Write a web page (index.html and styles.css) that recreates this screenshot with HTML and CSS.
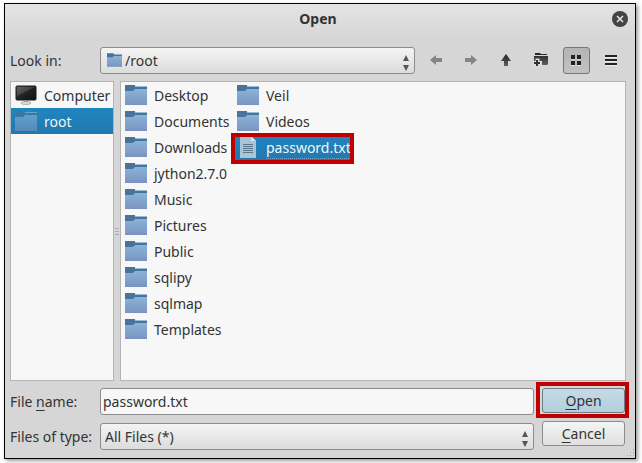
FILE: index.html
```html
<!DOCTYPE html>
<html lang="en">
<head>
    <meta charset="UTF-8">
    <meta name="viewport" content="width=device-width, initial-scale=1.0">
    <title>Open</title>
    <link rel="stylesheet" href="styles.css">
</head>
<body>
    <!-- shared icons -->
    <svg class="defs" width="0" height="0" aria-hidden="true">
        <defs>
            <linearGradient id="folder-fill" x1="0" y1="0" x2="0" y2="1">
                <stop offset="0" stop-color="#8cb5dc"/>
                <stop offset="1" stop-color="#7b93bf"/>
            </linearGradient>
            <linearGradient id="screen-fill" x1="0" y1="0" x2="1" y2="1">
                <stop offset="0" stop-color="#555"/>
                <stop offset="0.5" stop-color="#222"/>
                <stop offset="1" stop-color="#111"/>
            </linearGradient>
            <linearGradient id="dark-fill" x1="0" y1="0" x2="0" y2="1">
                <stop offset="0" stop-color="#222"/>
                <stop offset="1" stop-color="#606060"/>
            </linearGradient>
            <symbol id="folder" viewBox="0 0 22 20">
                <path d="M0 3h22v17H0z" fill="url(#folder-fill)"/>
                <path d="M0 0h10v2h12v2H10L8 6H0z" fill="#46749a"/>
                <path d="M10 1h12v1H10z" fill="#9fb9cd"/>
            </symbol>
            <symbol id="spin" viewBox="0 0 6 16">
                <path d="M3 0l3 6H0zM3 16l3-6H0z" fill="#555"/>
            </symbol>
        </defs>
    </svg>

    <main class="dialog">
        <header class="titlebar">
            <h1>Open</h1>
            <button class="close" type="button" aria-label="Close">
                <svg width="16" height="16" viewBox="0 0 16 16"><circle cx="8" cy="8" r="8" fill="#444"/><path d="M5 5l6 6M11 5l-6 6" stroke="#e8e8e8" stroke-width="1.5"/></svg>
            </button>
        </header>

        <div class="toolbar">
            <label for="look-in">Look in:</label>
            <div class="combo combo-icon">
                <svg class="combo-folder" width="15" height="14"><use href="#folder"/></svg>
                <select id="look-in"><option>/root</option></select>
                <svg class="spin" width="6" height="16"><use href="#spin"/></svg>
            </div>
            <button class="tool" type="button" aria-label="Back" disabled>
                <svg width="14" height="12" viewBox="0 0 14 12"><path d="M1 6l6-5v3h6v4H7v3z" fill="#858585"/></svg>
            </button>
            <button class="tool" type="button" aria-label="Forward" disabled>
                <svg width="14" height="12" viewBox="0 0 14 12"><path d="M13 6L7 1v3H1v4h6v3z" fill="#858585"/></svg>
            </button>
            <button class="tool" type="button" aria-label="Parent directory">
                <svg width="12" height="14" viewBox="0 0 12 14"><path d="M6 1l5 7H8v5H4V8H1z" fill="url(#dark-fill)"/></svg>
            </button>
            <button class="tool" type="button" aria-label="Create new folder">
                <svg width="16" height="16" viewBox="0 0 16 16"><path d="M2 1h5l1 1h6v1H2zM1 4h14v8l-1 1H1z" fill="url(#dark-fill)"/><path d="M4.500 6.500v9M0 11h9" stroke="#ddd" stroke-width="4"/><path d="M4 8v6M1 11h6" stroke="#333" stroke-width="2"/></svg>
            </button>
            <button class="tool active" type="button" aria-label="List view" aria-pressed="true">
                <svg width="12" height="12" viewBox="0 0 12 12"><path d="M1 1h4v4H1zM7 1h4v4H7zM1 7h4v4H1zM7 7h4v4H7z" fill="#222"/><path d="M1 5.500h4M7 5.500h4M1 11.500h4M7 11.500h4" stroke="#ddd"/></svg>
            </button>
            <button class="tool" type="button" aria-label="Detail view">
                <svg width="12" height="12" viewBox="0 0 12 12"><path d="M0 1h12v2H0zM0 5h12v2H0zM0 9h12v2H0z" fill="#222"/><path d="M0 3.500h12M0 7.500h12M0 11.500h12" stroke="#eee"/></svg>
            </button>
        </div>

        <div class="panes">
            <ul class="pane places">
                <li>
                    <svg width="22" height="20" viewBox="0 0 22 20"><rect x="1" y="1" width="20" height="14" rx="1" fill="url(#screen-fill)" stroke="#1b1b1b"/><path d="M2 2h18L2 11z" fill="#fff" opacity="0.12"/><path d="M9 16h4v2H9z" fill="#aaa"/><ellipse cx="11" cy="18" rx="5" ry="1.500" fill="#ddd" stroke="#999" stroke-width="0.7"/></svg>
                    <span>Computer</span>
                </li>
                <li class="selected"><svg class="dimmed" width="22" height="20"><use href="#folder"/></svg><span>root</span></li>
            </ul>
            <div class="splitter"></div>
            <ul class="pane files">
                <li><svg width="22" height="20"><use href="#folder"/></svg><span>Desktop</span></li>
                <li><svg width="22" height="20"><use href="#folder"/></svg><span>Documents</span></li>
                <li><svg width="22" height="20"><use href="#folder"/></svg><span>Downloads</span></li>
                <li><svg width="22" height="20"><use href="#folder"/></svg><span>jython2.7.0</span></li>
                <li><svg width="22" height="20"><use href="#folder"/></svg><span>Music</span></li>
                <li><svg width="22" height="20"><use href="#folder"/></svg><span>Pictures</span></li>
                <li><svg width="22" height="20"><use href="#folder"/></svg><span>Public</span></li>
                <li><svg width="22" height="20"><use href="#folder"/></svg><span>sqlipy</span></li>
                <li><svg width="22" height="20"><use href="#folder"/></svg><span>sqlmap</span></li>
                <li><svg width="22" height="20"><use href="#folder"/></svg><span>Templates</span></li>
                <li><svg width="22" height="20"><use href="#folder"/></svg><span>Veil</span></li>
                <li><svg width="22" height="20"><use href="#folder"/></svg><span>Videos</span></li>
                <li class="selected marked">
                    <svg width="22" height="22" viewBox="0 0 22 22"><path d="M3 0h11l5 5v17H3z" fill="#a9c4d6"/><path d="M14 0v5h5z" fill="#d3e3ee"/><path d="M6 8.500h10M6 10.500h10M6 12.500h10M6 14.500h10M6 16.500h10" stroke="#58798e"/></svg>
                    <span>password.txt</span>
                </li>
            </ul>
        </div>

        <form class="footer">
            <div class="fields">
                <label for="file-name">File <u>n</u>ame:</label>
                <input type="text" id="file-name" value="password.txt">
                <label for="file-type">Files of type:</label>
                <div class="combo">
                    <select id="file-type"><option>All Files (*)</option></select>
                    <svg class="spin" width="6" height="16"><use href="#spin"/></svg>
                </div>
            </div>
            <div class="actions">
                <div class="marked"><button class="primary" type="button"><u>O</u>pen</button></div>
                <button type="button"><u>C</u>ancel</button>
            </div>
        </form>
        <svg class="grip" width="8" height="8" viewBox="0 0 8 8"><path d="M6 0h1v1H6zM3 3h1v1H3zM6 3h1v1H6zM0 6h1v1H0zM3 6h1v1H3zM6 6h1v1H6z" fill="#aaa"/></svg>
    </main>
</body>
</html>
```
FILE: styles.css
```css
* {
    box-sizing: border-box;
}

body {
    margin: 0;
    padding: 3px 6px 4px 4px;
    background: #fff;
    color: #333;
    font-family: "Noto Sans", sans-serif;
    font-size: 14px;
    line-height: 20px;
}

button, input, select {
    color: inherit;
    font: inherit;
}

.defs {
    position: absolute;
}

.dialog {
    position: relative;
    padding: 0 9px 8px 5px;
    border: 1px solid #000;
    background: linear-gradient(#e4e4e4, #d6d6d6 36px);
    box-shadow: 2px 2px 4px rgba(0, 0, 0, 0.4);
}

/* title bar */
.titlebar {
    position: relative;
    height: 43px;
    padding-top: 5px;
}

h1 {
    margin: 0;
    font-size: 14px;
    line-height: 20px;
    text-align: center;
}

.close {
    position: absolute;
    top: 7px;
    right: -2px;
    width: 16px;
    height: 16px;
    padding: 0;
    border: none;
    background: none;
}

.close svg {
    display: block;
}

/* look in row */
.toolbar {
    display: flex;
    gap: 8px;
    align-items: center;
    padding-right: 1px;
}

.toolbar label {
    width: 82px;
}

.toolbar .combo {
    flex: 1;
}

.tool {
    display: flex;
    align-items: center;
    justify-content: center;
    width: 27px;
    height: 27px;
    padding: 0 1px 1px 0;
    border: 1px solid transparent;
    border-radius: 3px;
    background: none;
}

.tool.active {
    border-color: #777;
    background: linear-gradient(#b4b4b4, #c2c2c2);
}

.combo {
    position: relative;
}

select, input {
    display: block;
    width: 100%;
    height: 27px;
    border: 1px solid #8c8c8c;
    border-radius: 3px;
    outline: none;
}

select {
    padding: 0 20px 0 4px;
    appearance: none;
    background: linear-gradient(#f4f4f4, #dcdcdc);
}

input {
    padding: 0 2px;
    background: #f7f7f7;
}

.combo-icon select {
    padding-left: 24px;
}

.combo-folder {
    position: absolute;
    top: 6px;
    left: 7px;
}

.spin {
    position: absolute;
    top: 8px;
    right: 6px;
}

/* lists */
.panes {
    display: flex;
    margin-top: 7px;
}

.pane {
    min-height: 300px;
    margin: 0;
    padding: 0;
    border: 1px solid #b4b4b4;
    background: #f7f7f7;
    list-style: none;
}

.places {
    width: 104px;
}

.files {
    display: grid;
    flex: 1;
    grid-template-rows: repeat(10, 26px);
    grid-auto-columns: 112px;
    grid-auto-flow: column;
    padding-left: 2px;
}

.pane li {
    display: flex;
    align-items: center;
    gap: 7px;
    height: 26px;
    padding-left: 2px;
    white-space: nowrap;
}

.pane span {
    padding-top: 2px;
}

.places li {
    padding-left: 4px;
}

.pane .selected {
    background: linear-gradient(#1f86c0, #2378ae);
    color: #f0f6fa;
}

.dimmed {
    opacity: 0.6;
}

.splitter {
    width: 6px;
    background: repeating-linear-gradient(#aaa 0 1px, transparent 1px 3px) center / 4px 7px no-repeat;
}

.files .selected {
    width: 116px;
}

.files .selected span {
    border-bottom: 1px dotted #6fa9cf;
}

/* red frame round the things to click */
.marked {
    position: relative;
}

.marked::after {
    position: absolute;
    inset: -1px -3px -4px -4px;
    border: 4px solid #c00000;
    content: "";
    pointer-events: none;
}

/* file name and type */
.footer {
    display: flex;
    gap: 8px;
    margin-top: 7px;
    padding-right: 1px;
}

.fields {
    display: grid;
    flex: 1;
    grid-template-columns: 90px 1fr;
    row-gap: 8px;
    align-items: center;
}

.actions {
    display: flex;
    flex-direction: column;
    gap: 8px;
    width: 83px;
}

.actions button {
    display: block;
    width: 100%;
    height: 25px;
    padding: 0;
    border: 1px solid #8c8c8c;
    border-radius: 3px;
    background: linear-gradient(#f4f4f4, #e0e0e0);
}

.actions .primary {
    border-color: #6f7f88;
    background: linear-gradient(#c6dae5, #b3cfde);
}

.actions .marked::after {
    inset: -6px -4px -5px -6px;
}

u {
    text-underline-offset: 3px;
}

.grip {
    position: absolute;
    right: 0;
    bottom: 1px;
}
```
